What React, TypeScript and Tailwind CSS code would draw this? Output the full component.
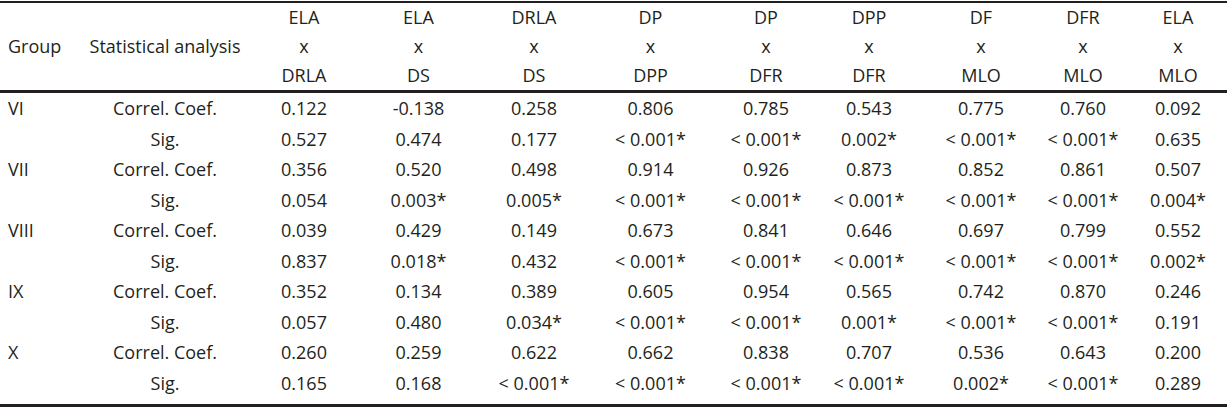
const columns = [
  ['ELA', 'DRLA'],
  ['ELA', 'DS'],
  ['DRLA', 'DS'],
  ['DP', 'DPP'],
  ['DP', 'DFR'],
  ['DPP', 'DFR'],
  ['DF', 'MLO'],
  ['DFR', 'MLO'],
  ['ELA', 'MLO'],
];

// nudges so each column sits where the reference centres it
const shift = ['pl-3', '', '', '', 'pl-[5px]', 'pr-[5px]', 'pl-[5px]', 'pl-[3px]', 'pr-[4px]'];

const L = '< 0.001*';

const groups: { name: string; coef: string[]; sig: string[] }[] = [
  {
    name: 'VI',
    coef: ['0.122', '-0.138', '0.258', '0.806', '0.785', '0.543', '0.775', '0.760', '0.092'],
    sig: ['0.527', '0.474', '0.177', L, L, '0.002*', L, L, '0.635'],
  },
  {
    name: 'VII',
    coef: ['0.356', '0.520', '0.498', '0.914', '0.926', '0.873', '0.852', '0.861', '0.507'],
    sig: ['0.054', '0.003*', '0.005*', L, L, L, L, L, '0.004*'],
  },
  {
    name: 'VIII',
    coef: ['0.039', '0.429', '0.149', '0.673', '0.841', '0.646', '0.697', '0.799', '0.552'],
    sig: ['0.837', '0.018*', '0.432', L, L, L, L, L, '0.002*'],
  },
  {
    name: 'IX',
    coef: ['0.352', '0.134', '0.389', '0.605', '0.954', '0.565', '0.742', '0.870', '0.246'],
    sig: ['0.057', '0.480', '0.034*', L, L, '0.001*', L, L, '0.191'],
  },
  {
    name: 'X',
    coef: ['0.260', '0.259', '0.622', '0.662', '0.838', '0.707', '0.536', '0.643', '0.200'],
    sig: ['0.165', '0.168', L, L, L, L, '0.002*', L, '0.289'],
  },
];

const grid =
  'grid grid-cols-[95px_140px_126px_115px_116px_117px_109px_107px_107px_99px_98px]';

function DataRow({ group, label, values }: { group: string; label: string; values: string[] }) {
  return (
    <div className={`${grid} h-[30.5px] items-center leading-[30.5px]`}>
      <div className="pl-2">{group}</div>
      <div className="text-center whitespace-nowrap">{label}</div>
      {values.map((v, i) => (
        <div key={i} className={`text-center whitespace-nowrap ${shift[i]}`}>
          {v}
        </div>
      ))}
    </div>
  );
}

export default function App() {
  return (
    <div
      className="h-[408px] w-[1229px] bg-white pt-px text-[18px] text-[#231f20]"
      style={{ fontFamily: '"Open Sans", "Noto Sans", sans-serif' }}
    >
      <div className="w-[1227px] border-t-2 border-b-[3px] border-[#231f20]">
        {/* header */}
        <div className={`${grid} border-b-[3px] border-[#231f20] leading-[29px]`}>
          <div className="flex items-center pl-2">Group</div>
          <div className="flex items-center justify-center whitespace-nowrap">Statistical analysis</div>
          {columns.map(([a, b], i) => (
            <div key={i} className={`flex flex-col items-center ${shift[i]}`}>
              <span>{a}</span>
              <span>x</span>
              <span>{b}</span>
            </div>
          ))}
        </div>

        <div className="pb-[6px]">
          {groups.map((g) => (
            <div key={g.name}>
              <DataRow group={g.name} label="Correl. Coef." values={g.coef} />
              <DataRow group="" label="Sig." values={g.sig} />
            </div>
          ))}
        </div>
      </div>
    </div>
  );
}
